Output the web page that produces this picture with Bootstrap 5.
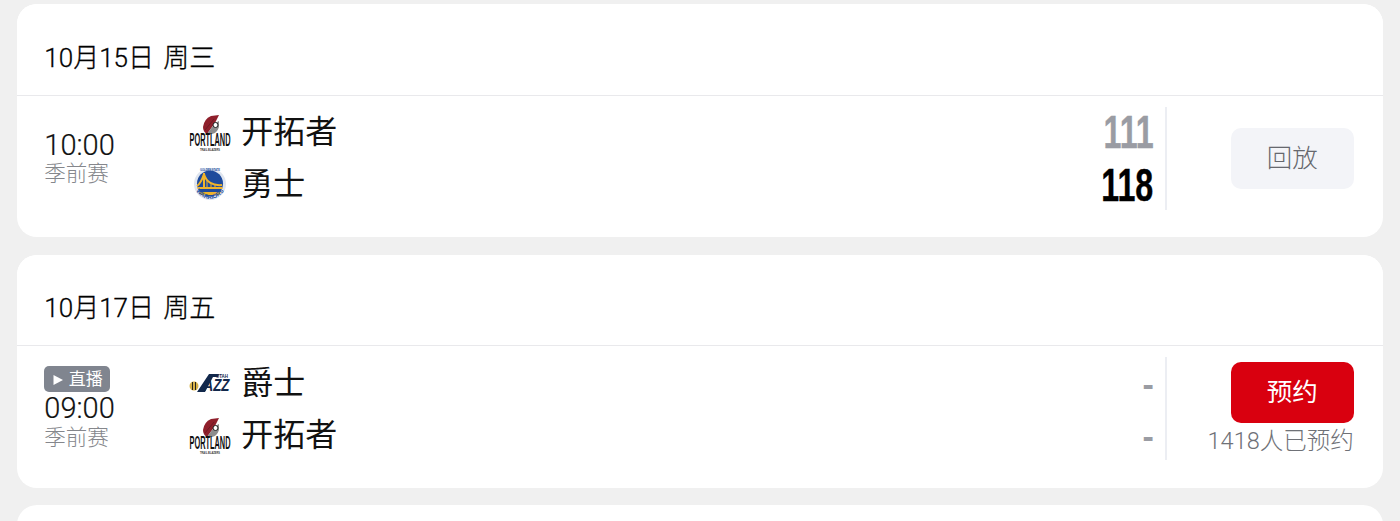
<!DOCTYPE html>
<html lang="zh">
<head>
<meta charset="utf-8">
<title>赛程</title>
<link rel="stylesheet" href="https://cdn.jsdelivr.net/npm/bootstrap@5.3.0/dist/css/bootstrap.min.css">
<style>
html,body{height:521px;overflow:hidden}
body{background:#f0f0f0;font-family:Roboto,"Noto Sans CJK SC",sans-serif;color:#111;padding:4.3px 17.3px 0}
.day-card{border:0;border-radius:20px;margin-bottom:17.35px;height:233px;background:#fff;overflow:hidden}
.day-head{height:91.500px;padding:16px 27px 0;font-size:26px;line-height:1;border-bottom:1px solid #e9e9ec;background:#fff;border-radius:0!important;word-spacing:3px;font-weight:300;color:#000;-webkit-text-stroke:.3px #000}
.game-row{height:141.500px;padding:11px 29px 27px 27px}
.time-col{width:145px;flex:none;height:103px;padding-bottom:2px}
.live-tag{width:66px;height:26px;background:#80858f;color:#fff;border-radius:5px;font-size:17px;line-height:1;gap:5px;padding-top:2px}
.live-tag svg{width:12px;height:12px}
.clock{font-size:29px;line-height:33px;font-weight:300;color:#111;-webkit-text-stroke:.2px #111}
.live-tag + .clock{margin-bottom:1px}
.stage{font-size:21.500px;line-height:24px;color:#85878c;font-weight:300}
.team-line{height:52px;gap:10px;font-size:32px;line-height:1;color:#111;padding-bottom:1px}
.team-logo{width:42px;height:42px;flex:none}
.score-col{width:156px;flex:none;border-right:2px solid #eceef3;height:103px;padding-right:11px}
.score-line{height:53px;font-family:"Liberation Sans",sans-serif;font-weight:700;font-size:46px;line-height:51px;text-align:right;color:#000}
.score-line span{display:inline-block;transform:scaleX(.7);transform-origin:right center;-webkit-text-stroke:.4px currentColor}
.score-line.dim{color:#9a9ca3}
.score-line.none{color:#9a9ca3;font-size:34px;height:52px;padding-top:2px}
.act-col{width:187px;flex:none;height:103px}
.act-btn{width:123px;height:61px;border-radius:10px;font-size:25.500px;line-height:1;border:0;padding:0;font-weight:300}
.btn-replay,.btn-replay:hover{background:#f3f4f8;color:#66686e}
.btn-book,.btn-book:hover{background:#d9000f;color:#fff;font-weight:400;margin-top:5px}
.book-count{font-size:23.500px;line-height:1;color:#6f7177;font-weight:300;margin-top:7px;white-space:nowrap}
.logo-text{font-family:"Liberation Sans",sans-serif;font-weight:700}
</style>
</head>
<body>
<svg width="0" height="0" class="position-absolute">
  <defs>
    <symbol id="logo-por" viewBox="0 0 42 42">
      <path d="M14 16 Q15 8 22 5 L30 4 L26 12 L18 23 Q14 21 14 16Z" fill="#8f1f2b"/>
      <path d="M18 23 L26 12 L30 10 V16 Q28 22 23 23Z" fill="#8d8d8d"/>
      <path d="M16 19 L25 8" stroke="#6d1a24" stroke-width="1" fill="none"/>
      <circle cx="26.500" cy="14" r="2.500" fill="#fff" stroke="#222" stroke-width="1"/>
      <text x="21" y="35" text-anchor="middle" font-size="17.500" textLength="41" lengthAdjust="spacingAndGlyphs" class="logo-text" fill="#111">PORTLAND</text>
      <text x="21" y="39.500" text-anchor="middle" font-size="3.500" textLength="20" lengthAdjust="spacingAndGlyphs" class="logo-text" fill="#333">TRAIL BLAZERS</text>
    </symbol>
    <symbol id="logo-gsw" viewBox="0 0 42 42">
      <circle cx="21" cy="21" r="16" fill="#dfe5ef"/>
      <circle cx="21" cy="20.500" r="13" fill="#1d4a9c"/>
      <path d="M8.500 25 H33.500 M15 25 V10 M15 11 C17 19 24 23 33 22 M15 11 C13 17 11 21 8 23" stroke="#efb32b" stroke-width="2" fill="none"/>
      <path d="M18 17 V24 M22 20 V24 M26 21.500 V24" stroke="#efb32b" stroke-width="1" fill="none"/>
      <path d="M10 29 H32 L30 32 H12Z" fill="#efb32b"/>
      <path id="gsw-arc" d="M5 26 Q21 46 37 26" fill="none"/>
      <text font-size="6" class="logo-text" fill="#24509f"><textPath href="#gsw-arc" startOffset="3">WARRIORS</textPath></text>
      <text x="21" y="7.500" text-anchor="middle" font-size="4" textLength="20" lengthAdjust="spacingAndGlyphs" class="logo-text" fill="#24509f">GOLDEN STATE</text>
    </symbol>
    <symbol id="logo-uta" viewBox="0 0 42 42">
      <circle cx="5" cy="24" r="4.500" fill="#d8b24a"/>
      <path d="M3.500 20 V28 M6.500 20 V28" stroke="#222" stroke-width="1"/>
      <path d="M8 30 L20 12 H30 L29 15 H24 L16 30Z" fill="#12284b"/>
      <text x="39" y="15.500" text-anchor="end" font-size="5.500" textLength="12" lengthAdjust="spacingAndGlyphs" class="logo-text" fill="#12284b">UTAH</text>
      <text x="27.500" y="29" text-anchor="middle" font-size="17" font-style="italic" textLength="26" lengthAdjust="spacingAndGlyphs" class="logo-text" fill="#12284b">AZZ</text>
    </symbol>
  </defs>
</svg>

<section class="card day-card">
  <div class="card-header day-head d-flex align-items-center">10月15日 周三</div>
  <div class="card-body game-row d-flex align-items-start">
    <div class="time-col d-flex flex-column justify-content-center">
      <div class="clock">10:00</div>
      <div class="stage">季前赛</div>
    </div>
    <div class="flex-grow-1">
      <div class="team-line d-flex align-items-center"><svg class="team-logo"><use href="#logo-por"/></svg><span>开拓者</span></div>
      <div class="team-line d-flex align-items-center"><svg class="team-logo"><use href="#logo-gsw"/></svg><span>勇士</span></div>
    </div>
    <div class="score-col">
      <div class="score-line dim"><span>111</span></div>
      <div class="score-line"><span>118</span></div>
    </div>
    <div class="act-col d-flex flex-column align-items-end justify-content-center">
      <button type="button" class="btn act-btn btn-replay">回放</button>
    </div>
  </div>
</section>

<section class="card day-card">
  <div class="card-header day-head d-flex align-items-center">10月17日 周五</div>
  <div class="card-body game-row d-flex align-items-start">
    <div class="time-col d-flex flex-column justify-content-center">
      <div class="live-tag d-flex align-items-center justify-content-center">
        <svg viewBox="0 0 12 12"><path d="M1.500 1 L11 6 L1.500 11Z" fill="#fff"/></svg><span>直播</span>
      </div>
      <div class="clock">09:00</div>
      <div class="stage">季前赛</div>
    </div>
    <div class="flex-grow-1">
      <div class="team-line d-flex align-items-center"><svg class="team-logo"><use href="#logo-uta"/></svg><span>爵士</span></div>
      <div class="team-line d-flex align-items-center"><svg class="team-logo"><use href="#logo-por"/></svg><span>开拓者</span></div>
    </div>
    <div class="score-col">
      <div class="score-line none d-flex align-items-center justify-content-end">-</div>
      <div class="score-line none d-flex align-items-center justify-content-end">-</div>
    </div>
    <div class="act-col d-flex flex-column align-items-end justify-content-start">
      <button type="button" class="btn act-btn btn-book">预约</button>
      <div class="book-count">1418人已预约</div>
    </div>
  </div>
</section>

<section class="card day-card"></section>
</body>
</html>
